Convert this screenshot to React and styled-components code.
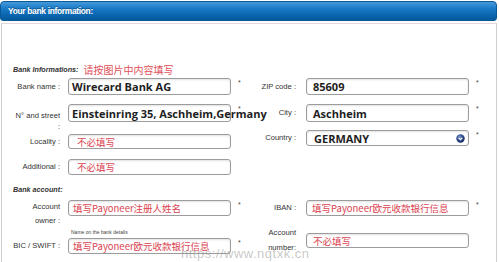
import React from "react";
import styled, { createGlobalStyle } from "styled-components";

const GlobalStyle = createGlobalStyle`
  html, body {
    margin: 0;
    padding: 0;
    background: #fff;
  }
  body {
    font-family: "Liberation Sans", Arial, sans-serif;
  }
`;

const Page = styled.div`
  position: relative;
  width: 499px;
  height: 262px;
  overflow: hidden;
  background: #fff;
`;

const Header = styled.div`
  margin-top: 1px;
  width: 497px;
  height: 20px;
  box-sizing: border-box;
  display: flex;
  align-items: center;
  padding-left: 7px;
  border: 1px solid #0b5a98;
  border-radius: 4px 4px 3px 3px;
  background: linear-gradient(#4599da 0%, #1b7bc6 35%, #0a67b2 70%, #06599c 100%);
  color: #fff;
  font: bold 8.4px "Liberation Sans", Arial, sans-serif;
  letter-spacing: -0.3px;
  text-shadow: 0 -1px 0 rgba(0, 0, 0, 0.3);
`;

const Panel = styled.div`
  margin: 2px 2px 0 1px;
  height: 240px;
  border-top: 1px solid #e4d7db;
  border-left: 1px solid #cfcfcf;
  border-right: 1px solid #cfcfcf;
`;

const Section = styled.div`
  display: flex;
  align-items: center;
  gap: 5px;
  height: 12px;
  margin: ${p => p.$top}px 0 0 11px;
`;

const SectionTitle = styled.span`
  font: italic bold 7.2px "Liberation Sans", Arial, sans-serif;
  color: #333;
`;

const Note = styled.span`
  font: 10px "Noto Sans CJK SC", sans-serif;
  color: #e0505c;
`;

const Row = styled.div`
  display: flex;
  align-items: flex-start;
  height: ${p => p.$h}px;
  margin-top: ${p => p.$top}px;
`;

const Field = styled.div`
  display: flex;
  align-items: ${p => p.$align || "center"};
  align-self: ${p => p.$self || "flex-start"};
  margin-top: ${p => p.$shift || 0}px;
`;

const Label = styled.div`
  flex-shrink: 0;
  width: ${p => p.$w}px;
  margin-right: ${p => p.$gap}px;
  padding-top: ${p => p.$pt || 0}px;
  text-align: right;
  font-size: 7.6px;
  line-height: ${p => p.$lh || 12}px;
  color: #333;
`;

const InputCol = styled.div`
  display: flex;
  flex-direction: column;
`;

const Input = styled.div`
  width: 163px;
  height: ${p => p.$h}px;
  box-sizing: border-box;
  display: flex;
  align-items: center;
  justify-content: space-between;
  padding: 0 3px 0 ${p => p.$pad}px;
  border: 1px solid #9c9c9c;
  border-radius: 3px;
  background: #fff;
  box-shadow: inset 0 1px 2px rgba(0, 0, 0, 0.12);
  white-space: nowrap;
  font: 700 11px "Open Sans", "Noto Sans", sans-serif;
  color: #1e1e1e;
`;

const Red = styled.span`
  font: 400 9.5px "Noto Sans CJK SC", sans-serif;
  color: #d9434f;
`;

const Hint = styled.div`
  margin-top: 12px;
  padding-left: 3px;
  font-size: 5px;
  line-height: 8px;
  color: #444;
`;

const Star = styled.span`
  flex-shrink: 0;
  align-self: flex-start;
  width: 19px;
  box-sizing: border-box;
  padding: 1px 0 0 7px;
  font-size: 7px;
  line-height: 7px;
  color: #444;
  visibility: ${p => (p.$off ? "hidden" : "visible")};
`;

const Watermark = styled.div`
  position: absolute;
  left: 181px;
  top: 246px;
  font: 13px "Liberation Sans", Arial, sans-serif;
  letter-spacing: 0.5px;
  color: rgba(130, 130, 130, 0.45);
`;

function SelectBall() {
  return (
    <svg width="9" height="9" viewBox="0 0 9 9">
      <defs>
        <radialGradient id="ball" cx="40%" cy="35%" r="65%">
          <stop offset="0%" stopColor="#7d9ad0" />
          <stop offset="60%" stopColor="#2c4a8c" />
          <stop offset="100%" stopColor="#15285a" />
        </radialGradient>
      </defs>
      <circle cx="4.5" cy="4.5" r="4.2" fill="url(#ball)" />
      <path d="M2.7 3.8 L4.5 5.6 L6.3 3.8" stroke="#fff" strokeWidth="1.2" fill="none" />
    </svg>
  );
}

export default function App() {
  return (
    <Page>
      <GlobalStyle />
      <Header>Your bank information:</Header>
      <Panel>
        <Section $top={39}>
          <SectionTitle>Bank Informations:</SectionTitle>
          <Note>请按图片中内容填写</Note>
        </Section>

        <Row $top={3} $h={17}>
          <Field>
            <Label $w={58} $gap={8}>Bank name :</Label>
            <Input $h={17} $pad={3}>Wirecard Bank AG</Input>
            <Star>*</Star>
          </Field>
          <Field>
            <Label $w={46} $gap={10}>ZIP code :</Label>
            <Input $h={17} $pad={6}>85609</Input>
            <Star>*</Star>
          </Field>
        </Row>

        <Row $top={9} $h={18}>
          <Field $align="flex-start">
            <Label $w={58} $gap={8} $lh={11} $pt={6}>N° and street<br />:</Label>
            <Input $h={18} $pad={3}>Einsteinring 35, Aschheim,Germany</Input>
            <Star>*</Star>
          </Field>
          <Field>
            <Label $w={46} $gap={10}>City :</Label>
            <Input $h={18} $pad={6}>Aschheim</Input>
            <Star>*</Star>
          </Field>
        </Row>

        <Row $top={8} $h={19}>
          <Field $self="flex-end">
            <Label $w={58} $gap={8}>Locality :</Label>
            <Input $h={15} $pad={8}><Red>不必填写</Red></Input>
            <Star $off>*</Star>
          </Field>
          <Field>
            <Label $w={46} $gap={10}>Country :</Label>
            <Input $h={16} $pad={7}>
              GERMANY
              <SelectBall />
            </Input>
            <Star>*</Star>
          </Field>
        </Row>

        <Row $top={10} $h={16}>
          <Field>
            <Label $w={58} $gap={8}>Additional :</Label>
            <Input $h={16} $pad={8}><Red>不必填写</Red></Input>
            <Star $off>*</Star>
          </Field>
        </Row>

        <Section $top={8}>
          <SectionTitle>Bank account:</SectionTitle>
        </Section>

        <Row $top={5} $h={37}>
          <Field $align="flex-start">
            <Label $w={58} $gap={8} $lh={14}>Account<br />owner :</Label>
            <InputCol>
              <Input $h={16} $pad={4}><Red>填写Payoneer注册人姓名</Red></Input>
              <Hint>Name on the bank details</Hint>
            </InputCol>
            <Star>*</Star>
          </Field>
          <Field $align="flex-start">
            <Label $w={46} $gap={10} $lh={16}>IBAN :</Label>
            <Input $h={16} $pad={5}><Red>填写Payoneer欧元收款银行信息</Red></Input>
            <Star>*</Star>
          </Field>
        </Row>

        <Row $top={1} $h={15}>
          <Field>
            <Label $w={58} $gap={8}>BIC / SWIFT :</Label>
            <Input $h={16} $pad={4}><Red>填写Payoneer欧元收款银行信息</Red></Input>
            <Star>*</Star>
          </Field>
          <Field $shift={-12}>
            <Label $w={46} $gap={10} $lh={14.5}>Account<br />number:</Label>
            <Input $h={15} $pad={6}><Red>不必填写</Red></Input>
          </Field>
        </Row>
      </Panel>
      <Watermark>https://www.nqtxk.cn</Watermark>
    </Page>
  );
}
